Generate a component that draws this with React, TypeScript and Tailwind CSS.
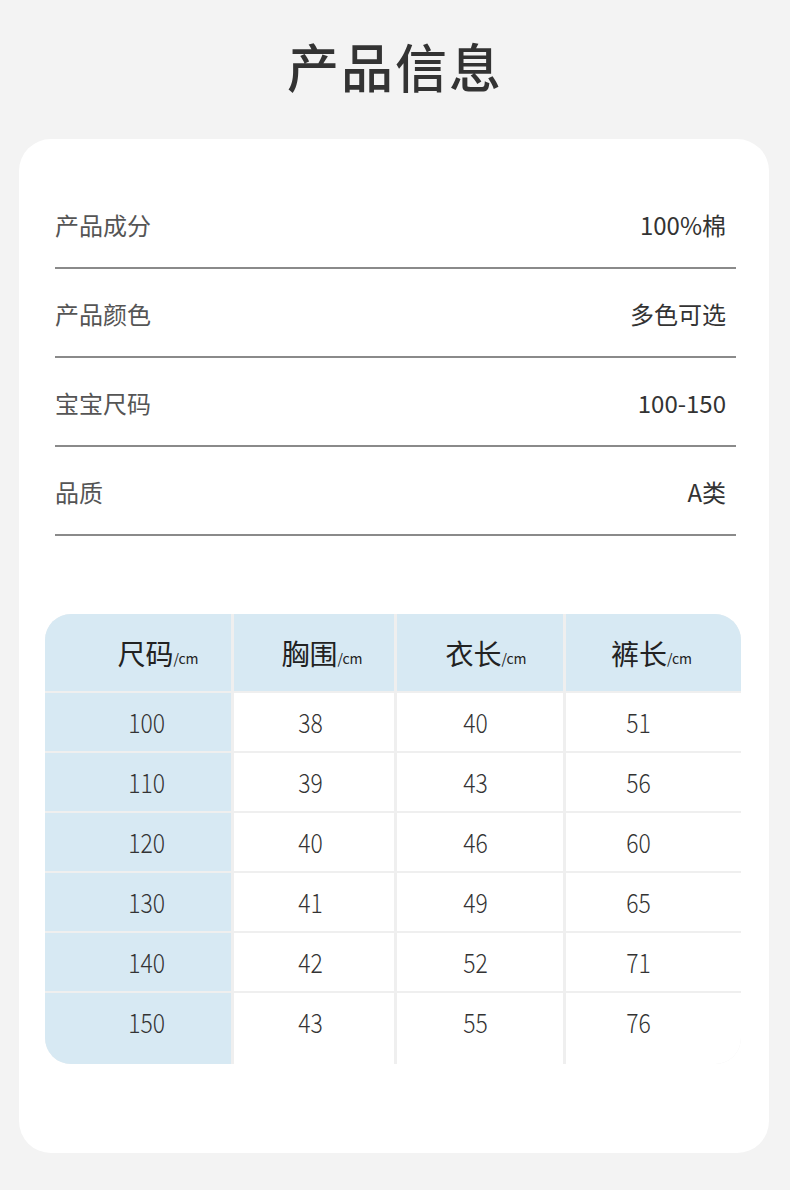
import React from "react";

const info = [
  ["产品成分", "100%棉"],
  ["产品颜色", "多色可选"],
  ["宝宝尺码", "100-150"],
  ["品质", "A类"],
];

const heads = ["尺码", "胸围", "衣长", "裤长"];
const headPad = ["pl-[40px]", "pl-[16px]", "pl-[12px]", "pr-[4px]"];
const bodyPad = ["pl-[18px]", "pr-[8px]", "pr-[10px]", "pr-[30px]"];

const rows = [
  ["100", "38", "40", "51"],
  ["110", "39", "43", "56"],
  ["120", "40", "46", "60"],
  ["130", "41", "49", "65"],
  ["140", "42", "52", "71"],
  ["150", "43", "55", "76"],
];

export default function App() {
  const font = { fontFamily: '"Noto Sans CJK SC", "Noto Sans", sans-serif' };
  return (
    <div className="w-[790px] h-[1190px] bg-[#f3f3f3] overflow-hidden" style={font}>
      <h1 className="pt-[38px] h-[139px] text-center text-[52px] leading-[56px] font-medium text-[#333] tracking-[2px]">
        产品信息
      </h1>
      <div className="mx-[19px] w-[750px] h-[1014px] bg-white rounded-[32px] pt-[41px]">
        <div className="pl-[36px] pr-[33px]">
          {info.map(([k, v]) => (
            <div key={k} className="flex justify-between items-start h-[89px] pt-[30px] border-b-2 border-[#8a8a8a]">
              <span className="text-[24px] leading-[30px] text-[#555]">{k}</span>
              <span className="text-[24px] leading-[30px] text-[#333] pr-[10px]">{v}</span>
            </div>
          ))}
        </div>
        <div className="ml-[26px] mt-[78px] w-[696px] rounded-[26px] overflow-hidden bg-[#efefef] grid grid-cols-[186px_160px_166px_175px] gap-x-[3px] gap-y-[2px]">
          {heads.map((h, i) => (
            <div key={h} className={`h-[77px] bg-[#d7e9f3] flex items-center justify-center ${headPad[i]}`}>
              <span className="text-[28px] leading-none text-[#222]">{h}</span>
              <span className="text-[14px] leading-none text-[#222] self-center mt-[10px]">/cm</span>
            </div>
          ))}
          {rows.map((r, ri) =>
            r.map((c, ci) => (
              <div
                key={ri + "-" + ci}
                className={`${ci === 0 ? "bg-[#d7e9f3]" : "bg-white"} ${ri === 5 ? "h-[71px] pb-[13px]" : "h-[58px]"} flex items-center justify-center ${bodyPad[ci]}`}
              >
                <span className="inline-block text-[27px] leading-none font-light text-[#333] scale-x-[0.85] -mt-[2px]">{c}</span>
              </div>
            ))
          )}
        </div>
      </div>
    </div>
  );
}
